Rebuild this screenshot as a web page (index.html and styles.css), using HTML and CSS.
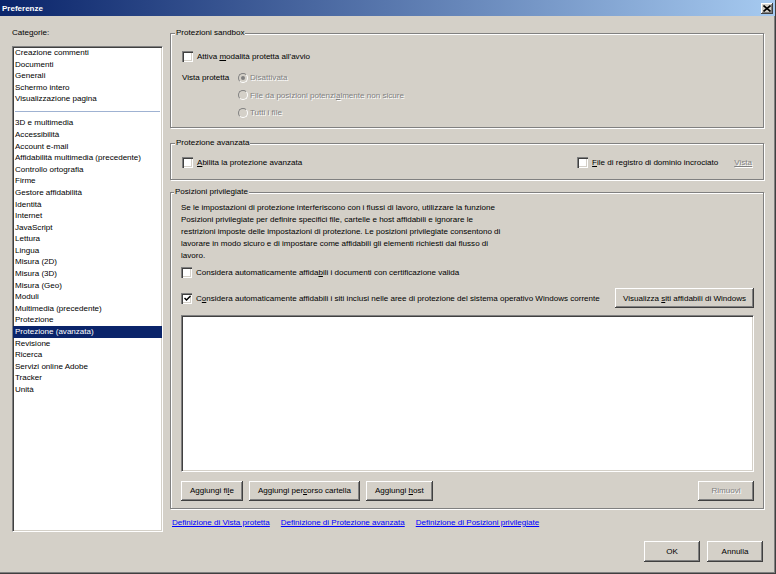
FILE: index.html
```html
<!DOCTYPE html>
<html lang="it">
<head>
<meta charset="utf-8">
<title>Preferenze</title>
<link rel="stylesheet" href="styles.css">
</head>
<body>
<div class="window">
  <div class="titlebar">
    <span class="title">Preferenze</span>
    <span class="close"><svg width="8" height="7" viewBox="0 0 8 7"><path d="M0.5 0.5 L7.5 6.5 M7.5 0.5 L0.5 6.5" stroke="#000" stroke-width="1.6" fill="none"/></svg></span>
  </div>
  <div class="main">
    <div class="sidebar">
      <div class="label">Cate<u>g</u>orie:</div>
      <div class="listbox">
        <div class="item">Creazione commenti</div>
        <div class="item">Documenti</div>
        <div class="item">Generali</div>
        <div class="item">Schermo intero</div>
        <div class="item">Visualizzazione pagina</div>
        <div class="sep"></div>
        <div class="item">3D e multimedia</div>
        <div class="item">Accessibilità</div>
        <div class="item">Account e-mail</div>
        <div class="item">Affidabilità multimedia (precedente)</div>
        <div class="item">Controllo ortografia</div>
        <div class="item">Firme</div>
        <div class="item">Gestore affidabilità</div>
        <div class="item">Identità</div>
        <div class="item">Internet</div>
        <div class="item">JavaScript</div>
        <div class="item">Lettura</div>
        <div class="item">Lingua</div>
        <div class="item">Misura (2D)</div>
        <div class="item">Misura (3D)</div>
        <div class="item">Misura (Geo)</div>
        <div class="item">Moduli</div>
        <div class="item">Multimedia (precedente)</div>
        <div class="item">Protezione</div>
        <div class="item selected">Protezione (avanzata)</div>
        <div class="item">Revisione</div>
        <div class="item">Ricerca</div>
        <div class="item">Servizi online Adobe</div>
        <div class="item">Tracker</div>
        <div class="item">Unità</div>
      </div>
    </div>
    <div class="panel">
      <div class="group g-sandbox">
        <div class="group-title">Protezioni sandbox</div>
        <div class="check row1"><span class="box"></span><span>Attiva <u>m</u>odalità protetta all'avvio</span></div>
        <div class="vista">
          <span class="vista-label">Vista protetta</span>
          <div class="radios">
            <div class="radio disabled"><span class="dot on"></span><span>Disattivata</span></div>
            <div class="radio disabled"><span class="dot"></span><span>File da posizioni potenzi<u>a</u>lmente non sicure</span></div>
            <div class="radio disabled"><span class="dot"></span><span>Tutti i file</span></div>
          </div>
        </div>
      </div>

      <div class="group g-advanced">
        <div class="group-title">Protezione avanzata</div>
        <div class="adv-row">
          <div class="check"><span class="box"></span><span><u>A</u>bilita la protezione avanzata</span></div>
          <div class="adv-right">
            <div class="check"><span class="box"></span><span><u>F</u>ile di registro di dominio incrociato</span></div>
            <span class="link disabled">Vista</span>
          </div>
        </div>
      </div>

      <div class="group g-priv">
        <div class="group-title">Posizioni privilegiate</div>
        <p class="desc">Se le impostazioni di protezione interferiscono con i flussi di lavoro, utilizzare la funzione<br>Posizioni privilegiate per definire specifici file, cartelle e host affidabili e ignorare le<br>restrizioni imposte delle impostazioni di protezione. Le posizioni privilegiate consentono di<br>lavorare in modo sicuro e di impostare come affidabili gli elementi richiesti dal flusso di<br>lavoro.</p>
        <div class="check cert"><span class="box"></span><span>Considera automaticamente affida<u>b</u>ili i documenti con certificazione valida</span></div>
        <div class="win-row">
          <div class="check"><span class="box checked"><svg width="7" height="7" viewBox="0 0 7 7"><path d="M0.5 3 L2.5 5 L6.5 1" stroke="#000" stroke-width="1.5" fill="none"/></svg></span><span>C<u>o</u>nsidera automaticamente affidabili i siti inclusi nelle aree di protezione del sistema operativo Windows corrente</span></div>
          <button class="btn btn-win">Visualizza <u>s</u>iti affidabili di Windows</button>
        </div>
        <div class="whitebox"></div>
        <div class="btn-row">
          <div class="btn-group">
            <button class="btn">Aggiungi fi<u>l</u>e</button>
            <button class="btn">Aggiungi per<u>c</u>orso cartella</button>
            <button class="btn">Aggiungi <u>h</u>ost</button>
          </div>
          <button class="btn btn-disabled">Rimuovi</button>
        </div>
      </div>

      <div class="links">
        <a class="link" href="#">Definizione di Vista protetta</a>
        <a class="link" href="#">Definizione di Protezione avanzata</a>
        <a class="link" href="#">Definizione di Posizioni privilegiate</a>
      </div>
    </div>
  </div>
  <div class="footer">
    <button class="btn btn-dlg">OK</button>
    <button class="btn btn-dlg">Annulla</button>
  </div>
</div>
</body>
</html>
```

FILE: styles.css
```css
* { box-sizing: border-box; }
html, body { margin: 0; padding: 0; }
body {
  background: #d4d0c8;
  font-family: "Liberation Sans", Arial, sans-serif;
  font-size: 8.05px;
  color: #000;
}
.window {
  width: 776px;
  height: 574px;
  display: flex;
  flex-direction: column;
  background: #d4d0c8;
  border-right: 1px solid #404040;
  border-bottom: 1px solid #404040;
  box-shadow: inset -1px -1px 0 #808080;
}
.titlebar {
  height: 16px;
  flex: none;
  display: flex;
  align-items: center;
  justify-content: space-between;
  padding: 0 2px 0 2px;
  background: linear-gradient(to right, #0a246a, #a6caf0);
}
.title { color: #fff; font-weight: bold; font-size: 8px; }
.close {
  width: 12px;
  height: 11px;
  background: #d4d0c8;
  display: flex;
  align-items: center;
  justify-content: center;
  box-shadow: inset -1px -1px 0 #404040, inset 1px 1px 0 #fff, inset -2px -2px 0 #808080;
}
.close svg { display: block; }

.main {
  flex: 1;
  min-height: 0;
  display: flex;
  gap: 7px;
  padding: 11px 11px 0 12px;
}
.sidebar {
  width: 151px;
  flex: none;
  display: flex;
  flex-direction: column;
}
.label { line-height: 12px; height: 12px; margin-bottom: 7px; }
.listbox {
  flex: 1;
  background: #fff;
  border: 1px solid;
  border-color: #808080 #fff #fff #808080;
  box-shadow: inset 1px 1px 0 #404040, inset -1px -1px 0 #d4d0c8;
  padding: 0;
}
.item {
  line-height: 11.6px;
  height: 11.6px;
  padding-left: 2px;
  white-space: nowrap;
}
.item.selected { background: #0a246a; color: #fff; }
.sep {
  height: 1px;
  margin: 5.7px 2px;
  background: #9fb2d2;
}

.panel {
  flex: 1;
  display: flex;
  flex-direction: column;
}
.group {
  border: 1px solid #808080;
  box-shadow: 1px 1px 0 #fff, inset 1px 1px 0 #fff;
  display: flex;
  flex-direction: column;
  padding: 0 11px;
}
.group-title {
  align-self: flex-start;
  margin: -7px 0 0 -7px;
  padding: 0 1px;
  line-height: 12px;
  height: 12px;
  background: #d4d0c8;
}
.check {
  display: flex;
  align-items: center;
  height: 14px;
  white-space: nowrap;
}
.box {
  width: 11px;
  height: 11px;
  flex: none;
  margin-right: 4px;
  background: #fff;
  display: flex;
  align-items: center;
  justify-content: center;
  box-shadow: inset 1px 1px 0 #808080, inset 2px 2px 0 #404040, inset -1px -1px 0 #fff, inset -2px -2px 0 #d4d0c8;
}
.box svg { display: block; margin: 1px 0 0 1px; }

.g-sandbox { margin-top: 6px; padding-bottom: 5px; }
.row1 { margin-top: 10px; }
.vista {
  margin-top: 6px;
  display: grid;
  grid-template-columns: 56px auto;
  align-items: start;
}
.vista-label { line-height: 17.5px; }
.radio {
  display: flex;
  align-items: center;
  height: 17.5px;
  white-space: nowrap;
}
.dot {
  width: 10px;
  height: 10px;
  flex: none;
  margin-right: 2px;
  border-radius: 50%;
  border: 1px solid;
  border-color: #808080 #fff #fff #808080;
  background: #d4d0c8;
  display: flex;
  align-items: center;
  justify-content: center;
}
.dot.on::after {
  content: "";
  width: 4px;
  height: 4px;
  border-radius: 50%;
  background: #808080;
}
.disabled { color: #808080; text-shadow: 1px 1px 0 #fff; }

.g-advanced { margin-top: 15px; padding-bottom: 9px; }
.adv-row {
  margin-top: 7px;
  display: flex;
  justify-content: space-between;
  align-items: center;
}
.adv-right { display: flex; align-items: center; gap: 16px; }

.g-priv { margin-top: 12px; padding: 0 9px 7px 10px; }
.desc {
  margin: 4px 0 0 0;
  line-height: 12px;
  white-space: nowrap;
}
.cert { margin-top: 4px; }
.win-row {
  margin-top: 8px;
  height: 21px;
  display: flex;
  align-items: center;
  justify-content: space-between;
}
.btn {
  font: inherit;
  color: #000;
  height: 20px;
  padding: 0 9px;
  background: #d4d0c8;
  border: none;
  border-radius: 0;
  white-space: nowrap;
  box-shadow: inset -1px -1px 0 #404040, inset 1px 1px 0 #fff, inset -2px -2px 0 #808080;
}
.btn-win { width: 139px; padding: 0; }
.whitebox {
  margin-top: 6px;
  height: 157px;
  background: #fff;
  border: 1px solid;
  border-color: #808080 #fff #fff #808080;
  box-shadow: inset 1px 1px 0 #404040, inset -1px -1px 0 #d4d0c8;
}
.btn-row {
  margin-top: 9px;
  display: flex;
  justify-content: space-between;
}
.btn-group { display: flex; gap: 6px; }
.btn-disabled { width: 56px; padding: 0; color: #808080; text-shadow: 1px 1px 0 #fff; }

.links {
  margin-top: 8px;
  padding-left: 2px;
  display: flex;
  gap: 11px;
  line-height: 12px;
}
.link { color: #0000ff; text-decoration: underline; }
.link.disabled { color: #808080; }

.footer {
  flex: none;
  display: flex;
  justify-content: flex-end;
  gap: 7px;
  padding: 9px 12px 11px 0;
}
.btn-dlg { width: 56px; height: 21px; padding: 0; }
```
